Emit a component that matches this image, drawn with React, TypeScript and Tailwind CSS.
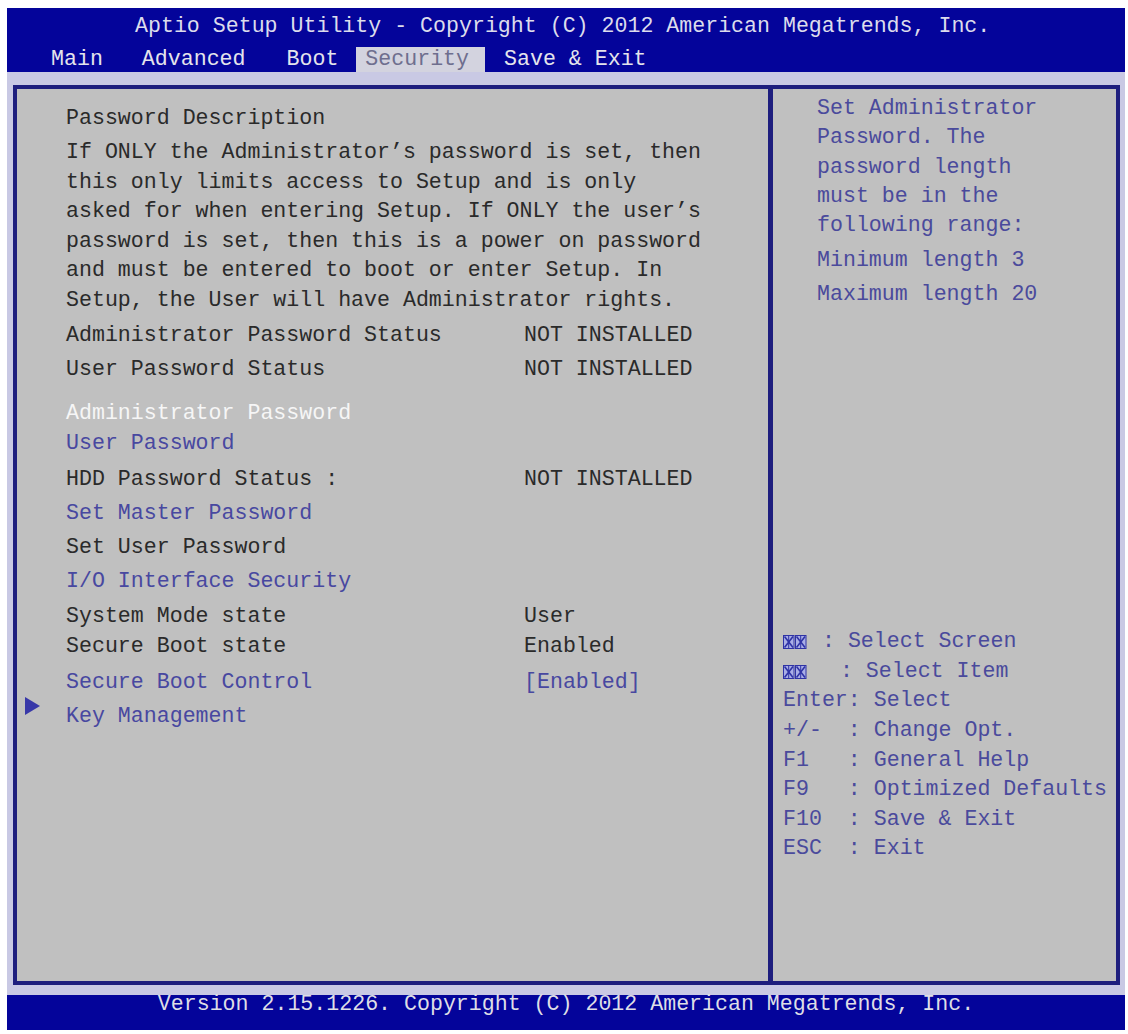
import React from "react";

const mono = { fontFamily: '"Liberation Mono", "Courier New", monospace' };

function Arrows() {
  return (
    <svg width="24" height="14" viewBox="0 0 24 14" className="inline-block">
      {[0, 12].map((x) => (
        <g key={x}>
          <rect x={x + 0.5} y={0.5} width={10.5} height={13} fill="#a9aee6" stroke="#2f33a6" strokeWidth="1" />
          <path d={`M${x + 1.5} 1.5 L${x + 10} 12.5 M${x + 10} 1.5 L${x + 1.5} 12.5`} stroke="#2f33a6" strokeWidth="1.6" />
          <path d={`M${x + 5.7} 1 L${x + 5.7} 13`} stroke="#2f33a6" strokeWidth="1" />
        </g>
      ))}
    </svg>
  );
}

type Row = { label: string; value?: string; color: string; mt: string; cursor?: boolean };

const rows: Row[] = [
  { label: "Administrator Password Status", value: "NOT INSTALLED", color: "text-[#2a2a2a]", mt: "mt-[4px]" },
  { label: "User Password Status", value: "NOT INSTALLED", color: "text-[#2a2a2a]", mt: "mt-[4px]" },
  { label: "Administrator Password", color: "text-[#f6f6f6]", mt: "mt-[14px]" },
  { label: "User Password", color: "text-[#4848a0]", mt: "mt-0" },
  { label: "HDD Password Status :", value: "NOT INSTALLED", color: "text-[#2a2a2a]", mt: "mt-[6px]" },
  { label: "Set Master Password", color: "text-[#4848a0]", mt: "mt-[4px]" },
  { label: "Set User Password", color: "text-[#2a2a2a]", mt: "mt-[4px]" },
  { label: "I/O Interface Security", color: "text-[#4848a0]", mt: "mt-[4px]" },
  { label: "System Mode state", value: "User", color: "text-[#2a2a2a]", mt: "mt-[5px]" },
  { label: "Secure Boot state", value: "Enabled", color: "text-[#2a2a2a]", mt: "mt-0" },
  { label: "Secure Boot Control", value: "[Enabled]", color: "text-[#4848a0]", mt: "mt-[6px]" },
  { label: "Key Management", color: "text-[#4848a0]", mt: "mt-[4px]", cursor: true },
];

const para = [
  "If ONLY the Administrator\u2019s password is set, then",
  "this only limits access to Setup and is only",
  "asked for when entering Setup. If ONLY the user\u2019s",
  "password is set, then this is a power on password",
  "and must be entered to boot or enter Setup. In",
  "Setup, the User will have Administrator rights.",
];

const help: [string, string][] = [
  ["", " : Select Screen"],
  ["", "   : Select Item"],
  ["Enter", ": Select"],
  ["+/-", "  : Change Opt."],
  ["F1", "   : General Help"],
  ["F9", "   : Optimized Defaults"],
  ["F10", "  : Save & Exit"],
  ["ESC", "  : Exit"],
];

export default function App() {
  return (
    <div className="w-[1128px] h-[1034px] bg-white pt-[8px] pl-[7px] text-[21.6px]" style={mono}>
      <div className="w-[1118px] h-[1022px] bg-[#c9c9e4] flex flex-col">
        {/* top bar */}
        <div className="h-[64px] bg-[#04049a] flex flex-col">
          <div className="h-[37px] leading-[37px] pl-[128px] text-[#dcdcec] whitespace-pre">
            Aptio Setup Utility - Copyright (C) 2012 American Megatrends, Inc.
          </div>
          <div className="h-[27px] flex items-end pl-[44px] text-[#e4e4ec] whitespace-pre">
            <div className="h-[25px] leading-[25px]">Main</div>
            <div className="h-[25px] leading-[25px] ml-[39px]">Advanced</div>
            <div className="h-[25px] leading-[25px] ml-[41px]">Boot</div>
            <div className="h-[25px] leading-[25px] ml-[18px] pl-[9px] pr-[16px] bg-[#d3d3df] text-[#6e6e8e]">Security</div>
            <div className="h-[25px] leading-[25px] ml-[19px]">Save &amp; Exit</div>
          </div>
        </div>

        {/* main panel */}
        <div className="mt-[13px] ml-[6px] w-[1107px] h-[900px] border-4 border-[#1e1e7e] bg-[#c0c0c0] flex">
          <div className="w-[751px] flex flex-col pt-[14px] whitespace-pre">
            <div className="h-[30px] leading-[30px] pl-[49px] text-[#2a2a2a]">Password Description</div>
            <div className="mt-[5px] pl-[49px] leading-[29.6px] text-[#2a2a2a]">
              {para.map((l) => (
                <div key={l}>{l}</div>
              ))}
            </div>
            {rows.map((r) => (
              <div key={r.label} className={`h-[30px] leading-[30px] flex items-center ${r.mt} ${r.color}`}>
                <div className="w-[49px] pl-[7px] flex items-center">
                  {r.cursor && (
                    <svg width="17" height="18" viewBox="0 0 17 18" className="-translate-y-[10px]">
                      <path d="M1 0 L16 9 L1 18 Z" fill="#3838a8" />
                    </svg>
                  )}
                </div>
                <div className="w-[458px]">{r.label}</div>
                {r.value && <div>{r.value}</div>}
              </div>
            ))}
          </div>
          <div className="w-[5px] bg-[#1e1e7e]" />
          <div className="flex-1 flex flex-col text-[#4a4a9c] whitespace-pre">
            <div className="pt-[5px] pl-[44px] leading-[29.3px]">
              <div>Set Administrator</div>
              <div>Password. The</div>
              <div>password length</div>
              <div>must be in the</div>
              <div>following range:</div>
            </div>
            <div className="pl-[44px] mt-[5px] leading-[30px]">Minimum length 3</div>
            <div className="pl-[44px] mt-[4px] leading-[30px]">Maximum length 20</div>
            <div className="mt-auto pb-[117px] pl-[10px] leading-[29.6px]">
              {help.map(([k, v], i) => (
                <div key={i} className="flex items-center">
                  {i < 2 ? (
                    <span className="w-[26px] flex items-center">
                      <Arrows />
                    </span>
                  ) : (
                    <span>{k}</span>
                  )}
                  <span className={i === 1 ? "-ml-[8px]" : ""}>{v}</span>
                </div>
              ))}
            </div>
          </div>
        </div>

        {/* bottom bar */}
        <div className="mt-[10px] h-[35px] bg-[#04049a] text-[#dedee6] text-center leading-[18px] whitespace-pre">
          Version 2.15.1226. Copyright (C) 2012 American Megatrends, Inc.
        </div>
      </div>
    </div>
  );
}
